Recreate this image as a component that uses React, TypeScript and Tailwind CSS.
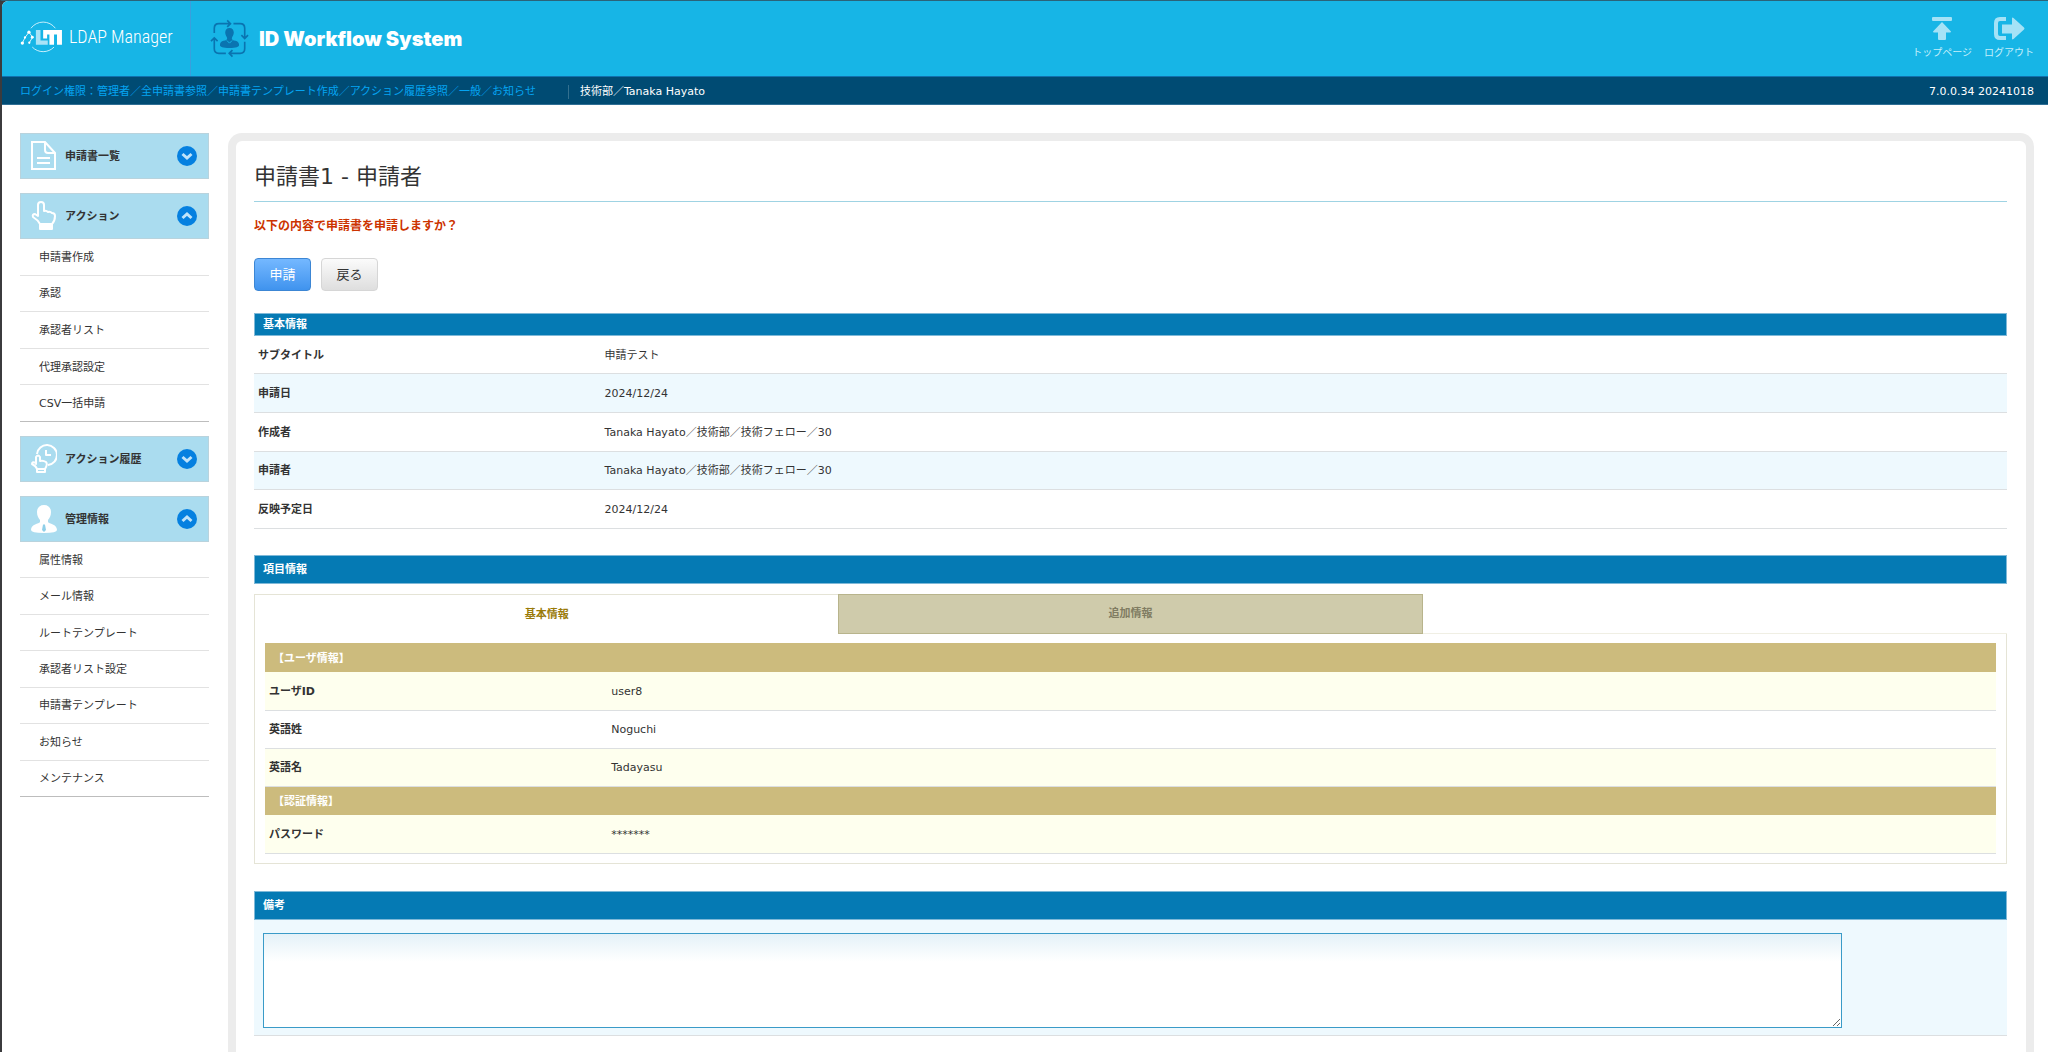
import { useId, type ReactNode } from "react";

const HEADING = "border border-[#7fb9d8] bg-[#057ab4] pl-2 text-left text-[11px] font-bold text-white";

function LogoMark() {
  return (
    <svg viewBox="60 57 130 100" className="h-[33px] w-[43px]" fill="none" aria-hidden="true">
      <path d="M93 82A46 46 0 0 1 167 82M97 139A46 46 0 0 0 163 139" stroke="#c9effb" strokeWidth="3" />
      <path d="M67 127L75 110L87 94L98 109L88 126" stroke="#fff" strokeWidth="2.5" />
      <g fill="#fff">
        <circle cx="87" cy="94" r="5" />
        <circle cx="75" cy="110" r="3.500" />
        <circle cx="97" cy="109" r="4.500" />
        <circle cx="67" cy="127" r="5" />
        <circle cx="88" cy="126" r="3.500" />
      </g>
      <path d="M108 87H122V119H144V132H108Z" fill="#a9e3f7" />
      <path d="M130 87H187V132H172V101H163V132H149V101H142V113H130Z" fill="#fff" />
    </svg>
  );
}

function WorkflowIcon() {
  return (
    <svg viewBox="628 56 116 118" className="h-[39px] w-[39px]" fill="none" aria-hidden="true">
      <g stroke="#0a74b0" strokeWidth="5">
        <path d="M640 98V84Q640 70 654 70H688M679 60L689 70L679 80" />
        <path d="M698 70H718Q732 70 732 84V114M722 105L732 115L742 105" />
        <path d="M732 125V146Q732 160 718 160H686M695 150L685 160L695 170" />
        <path d="M675 160H654Q640 160 640 146V114M630 123L640 113L650 123" />
      </g>
      <path
        d="M686 83C694 83 699 89 699 97C699 105 694 110 693 114C693 119 697 121 704 122C711 123 715 129 715 135C715 141 706 144 686 144C666 144 657 141 657 135C657 129 661 123 668 122C675 121 679 119 679 114C678 110 673 105 673 97C673 89 678 83 686 83Z"
        fill="#0a74b0"
      />
      <path d="M678 121L686 129L694 121" stroke="#17b5e6" strokeWidth="3" />
    </svg>
  );
}

function TopPageIcon() {
  return (
    <svg viewBox="0 0 20 24" className="h-6 w-5" fill="#a5e2f6" aria-hidden="true">
      <rect x="0" y="0" width="20" height="4" rx="1" />
      <path d="M10 5L19 14.500Q19 15.500 18 15.500H14V22Q14 23 13 23H7Q6 23 6 22V15.500H2Q1 15.500 1 14.500Z" />
    </svg>
  );
}

function LogoutIcon() {
  return (
    <svg viewBox="0 0 31 24" className="h-6 w-[31px]" aria-hidden="true">
      <path d="M12 2H6Q2 2 2 6V17Q2 21 6 21H12" fill="none" stroke="#a5e2f6" strokeWidth="4" />
      <path d="M8 7.500H18V1.500Q18 0 19.500 1L30 10.500Q31 11.500 30 12.500L19.500 22Q18 23 18 21.500V16.500H8Z" fill="#a5e2f6" />
    </svg>
  );
}

function DocumentIcon() {
  return (
    <svg viewBox="0 0 26 30" className="h-[30px] w-[26px]" fill="none" stroke="#fff" strokeWidth="2" aria-hidden="true">
      <path d="M1 1H14L24 12V28H1Z" />
      <path d="M14 1V9Q14 12 17 12H24M6 17H19M6 22H19" />
    </svg>
  );
}

function HandIcon() {
  return (
    <svg viewBox="0 0 26 30" className="h-[30px] w-[26px]" fill="none" stroke="#fff" strokeWidth="2" strokeLinejoin="round" aria-hidden="true">
      <path d="M7 15V4Q7 1 10 1Q13 1 13 4V10Q15 9 17 11Q19 10 21 12Q24 12 24 15Q24 20 21 23H9Q7 19 2 16Q1 13 4 13Z" />
      <path d="M9 23H21V28H9Z" fill="#fff" />
    </svg>
  );
}

function HistoryIcon() {
  return (
    <svg viewBox="0 0 26 30" className="h-[30px] w-[26px]" fill="none" stroke="#fff" strokeWidth="2" strokeLinejoin="round" aria-hidden="true">
      <path d="M6 10A10 10 0 1 1 17 21" />
      <path d="M15 6V11H20" />
      <path d="M5 20V13Q7 10 9 13V17Q12 16 15 18Q17 20 14 25H6Q5 22 1 20Q1 17 5 19Z" />
      <path d="M6 25H14V28H6Z" />
    </svg>
  );
}

function PersonIcon() {
  return (
    <svg viewBox="0 0 26 30" className="h-[30px] w-[26px]" aria-hidden="true">
      <path
        d="M13 1C17.500 1 20 4 20 8C20 12 18.500 14 17 16V18C18 20 26 20 26 26Q26 29 13 29Q0 29 0 26C0 20 8 20 9 18V16C7.500 14 6 12 6 8C6 4 8.500 1 13 1Z"
        fill="#fff"
      />
      <path d="M12 20.500H14L15 26L13 28L11 26Z" fill="#8fcfe8" />
    </svg>
  );
}

function Arrow({ open }: { open: boolean }) {
  return (
    <svg viewBox="0 0 20 20" className="h-5 w-5" aria-hidden="true">
      <circle cx="10" cy="10" r="10" fill="#0580e0" />
      <path d={open ? "M5.500 12L10 8L14.500 12" : "M5.500 8L10 12L14.500 8"} fill="none" stroke="#bfe3fa" strokeWidth="3" />
    </svg>
  );
}

function MenuGroup({ icon, label, items = [], listHeight = "" }: { icon: ReactNode; label: string; items?: string[]; listHeight?: string }) {
  const open = items.length > 0;
  return (
    <section>
      <button type="button" aria-expanded={open} className="flex h-[46px] w-full items-center border border-[#b9d3dd] bg-[#aadcef] pr-[11px] pl-[10px] text-left text-[11px] font-bold">
        {icon}
        <span className="ml-2 flex-1 pt-0.5">{label}</span>
        <Arrow open={open} />
      </button>
      {open && (
        <ul className={`grid auto-rows-fr ${listHeight}`}>
          {items.map((item) => (
            <li key={item} className="flex items-center border-b border-[#e2e2e2] pt-0.5 last:border-[#bdbdbd]">
              <a href="#" className="block w-full pl-[19px]">{item}</a>
            </li>
          ))}
        </ul>
      )}
    </section>
  );
}

function Row({ label, value, tint, className = "" }: { label: string; value: string; tint: string; className?: string }) {
  return (
    <tr className={`border-b border-[#dcdfe1] ${tint} ${className}`}>
      <th scope="row" className="w-1/5 pt-0.5 pl-1 text-left font-bold">{label}</th>
      <td className="pt-0.5">{value}</td>
    </tr>
  );
}

const basics = [
  ["サブタイトル", "申請テスト"],
  ["申請日", "2024/12/24"],
  ["作成者", "Tanaka Hayato／技術部／技術フェロー／30"],
  ["申請者", "Tanaka Hayato／技術部／技術フェロー／30"],
  ["反映予定日", "2024/12/24"],
];

export default function App() {
  const remarks = useId();
  return (
    <div className="h-screen overflow-hidden border-t border-l-2 border-t-[#2b6379] border-l-[#3b3b3d] bg-[#3b3b3d] font-['DejaVu_Sans','Noto_Sans_CJK_JP',sans-serif] text-[11px] leading-4 text-[#333]">
      <div className="min-h-full overflow-hidden rounded-tl-md bg-white">
        <header className="flex h-[75px] bg-[#17b5e6]">
          <div className="flex w-[189px] items-center gap-[6px] border-r border-[#3a9fdc] pb-1 pl-[18px]">
            <LogoMark />
            <span className="font-['Liberation_Sans_Narrow','Roboto_Condensed',sans-serif] text-[18px] leading-6 font-light whitespace-nowrap text-white">LDAP Manager</span>
          </div>
          <div className="flex flex-1 items-center gap-[10px] pl-[19px]">
            <WorkflowIcon />
            <h1 className="font-['Inter',sans-serif] text-[20px] leading-6 font-black text-white">ID Workflow System</h1>
          </div>
          <nav className="flex items-start gap-3 pt-4 pr-[14px] text-[10px] leading-3 text-[#c5effb]">
            <a href="#" className="flex flex-col items-center gap-[6px]"><TopPageIcon />トップページ</a>
            <a href="#" className="flex flex-col items-center gap-[6px]"><LogoutIcon />ログアウト</a>
          </nav>
        </header>
        <div className="flex h-[29px] items-center border-t border-b border-t-[#1071ae] border-b-[#2f6f95] bg-[#004b73] pt-0.5 pr-[14px] pl-[18px] text-white">
          <span className="text-[#05a4f2]">ログイン権限：管理者／全申請書参照／申請書テンプレート作成／アクション履歴参照／一般／お知らせ</span>
          <span className="ml-8 flex-1 border-l border-[#33708f] pl-[11px] leading-[14px]">技術部／Tanaka Hayato</span>
          <span>7.0.0.34 20241018</span>
        </div>

        <div className="flex gap-[19px] pt-7 pr-[14px] pl-[18px]">
          <aside className="flex w-[189px] shrink-0 flex-col gap-[14px]">
            <MenuGroup icon={<DocumentIcon />} label="申請書一覧" />
            <MenuGroup icon={<HandIcon />} label="アクション" listHeight="min-h-[183px]" items={["申請書作成", "承認", "承認者リスト", "代理承認設定", "CSV一括申請"]} />
            <MenuGroup icon={<HistoryIcon />} label="アクション履歴" />
            <MenuGroup icon={<PersonIcon />} label="管理情報" listHeight="min-h-[255px]" items={["属性情報", "メール情報", "ルートテンプレート", "承認者リスト設定", "申請書テンプレート", "お知らせ", "メンテナンス"]} />
          </aside>

          <main className="min-w-0 flex-1 rounded-t-[14px] border-8 border-b-0 border-[#ececec] pt-5 pr-[19px] pb-16 pl-[18px]">
            <h2 className="border-b border-[#9fd3e3] pt-1 pb-3 text-[22px] leading-6">申請書1 - 申請者</h2>
            <p className="mt-4 text-[12px] font-bold text-[#cc3300]">以下の内容で申請書を申請しますか？</p>
            <div className="mt-6 flex gap-[10px] text-[13px]">
              <button type="button" className="h-[33px] w-[57px] rounded border border-[#3c86d4] bg-linear-to-b from-[#74b8ff] to-[#3f93ee] text-white">申請</button>
              <button type="button" className="h-[33px] w-[57px] rounded border border-[#d6d6d6] bg-linear-to-b from-[#fbfbfb] to-[#dedede]">戻る</button>
            </div>

            <h3 className={`mt-[22px] leading-[21px] ${HEADING}`}>基本情報</h3>
            <table className="h-[193px] w-full border-collapse">
              <tbody>
                {basics.map(([label, value], i) => (
                  <Row key={label} label={label} value={value} tint={i % 2 ? "bg-[#eef9fe]" : "bg-white"} />
                ))}
              </tbody>
            </table>

            <h3 className={`mt-[26px] leading-[27px] ${HEADING}`}>項目情報</h3>
            <div className="mt-[10px]">
              <div role="tablist" className="grid grid-cols-3 font-bold">
                <button type="button" role="tab" aria-selected="true" className="h-10 border border-r-0 border-b-0 border-[#e5e4d6] text-[#9a7b0a]">基本情報</button>
                <button type="button" role="tab" aria-selected="false" className="h-10 border border-[#b8b48c] bg-[#cfcbab] text-[#807c62]">追加情報</button>
                <div className="border-b border-[#f0efe4]" />
              </div>
              <div role="tabpanel" className="border border-t-0 border-[#e5e4d6] px-[10px] pt-[9px] pb-[9px]">
                <table className="w-full border-collapse">
                  <tbody>
                    <tr className="h-[29px] bg-[#ccbb7d] text-white"><th colSpan={2} className="pt-0.5 pl-2 text-left">【ユーザ情報】</th></tr>
                    <Row className="h-[38px]" label="ユーザID" value="user8" tint="bg-[#feffee]" />
                    <Row className="h-[38px]" label="英語姓" value="Noguchi" tint="bg-white" />
                    <Row className="h-[38px]" label="英語名" value="Tadayasu" tint="bg-[#feffee]" />
                    <tr className="h-[29px] bg-[#ccbb7d] text-white"><th colSpan={2} className="pt-0.5 pl-2 text-left">【認証情報】</th></tr>
                    <Row className="h-[38px]" label="パスワード" value="*******" tint="bg-[#feffee]" />
                  </tbody>
                </table>
              </div>
            </div>

            <h3 className={`mt-[27px] leading-[27px] ${HEADING}`}><label htmlFor={remarks}>備考</label></h3>
            <div className="border-b border-[#dcdfe1] bg-[#eef9fe] px-[9px] pt-[13px] pb-[7px]">
              <textarea id={remarks} className="block h-[95px] w-[91%] border border-[#3a9bc8] bg-white bg-linear-to-b from-[#e4f1f8] to-white to-30% p-1" />
            </div>
          </main>
        </div>
      </div>
    </div>
  );
}
